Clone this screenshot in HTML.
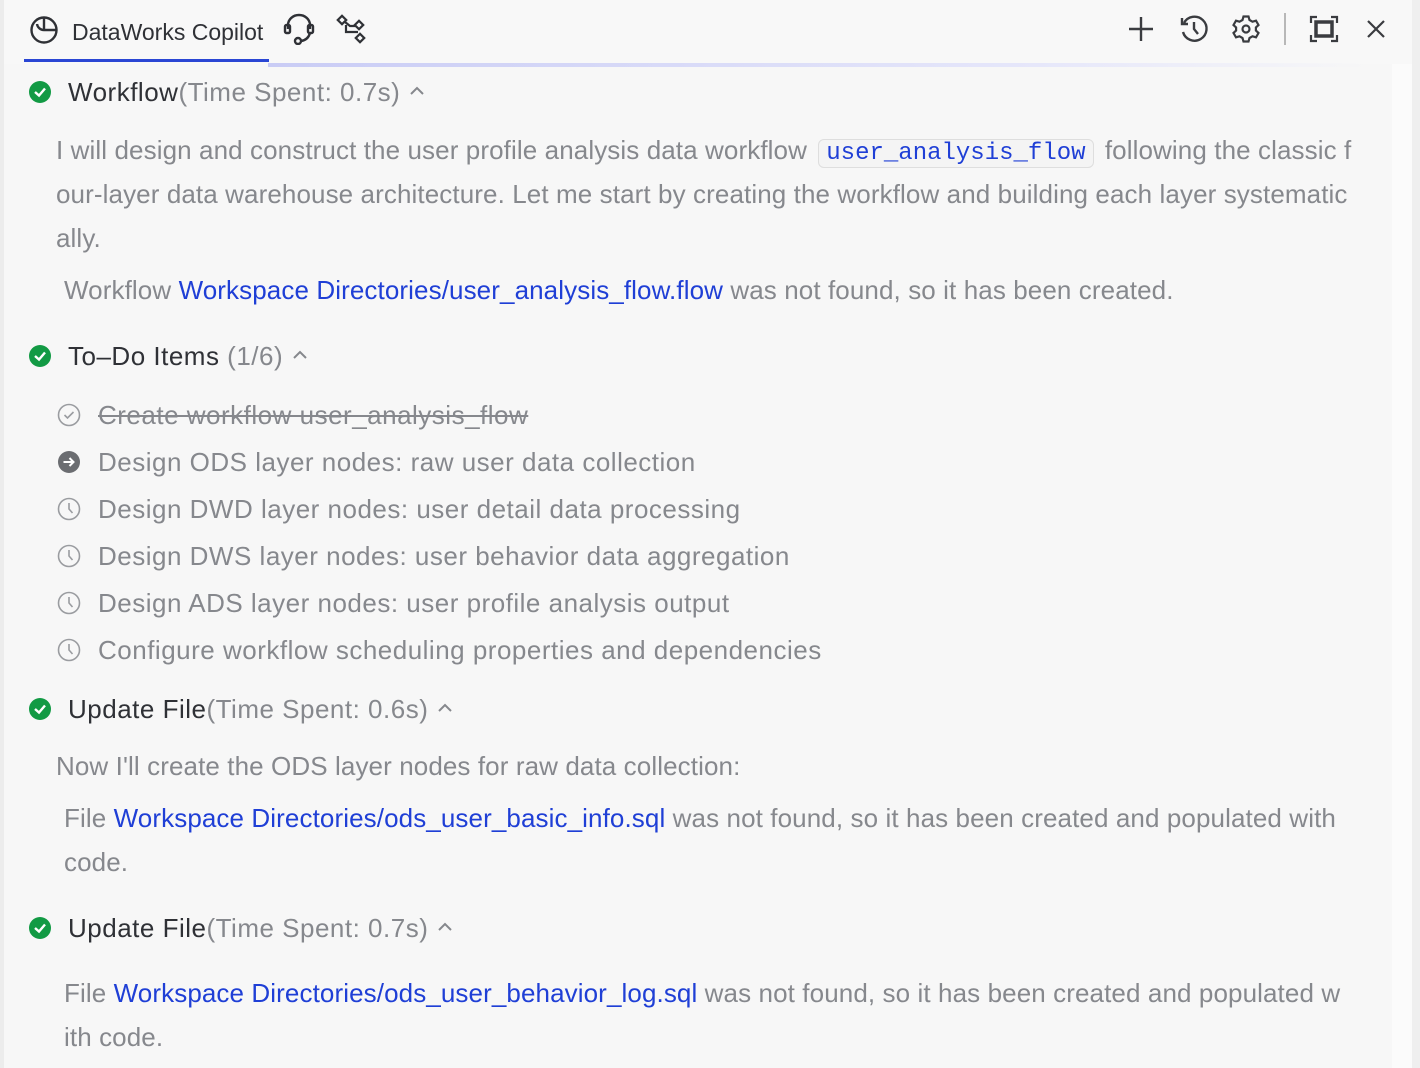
<!DOCTYPE html>
<html><head><meta charset="utf-8"><style>
*{margin:0;padding:0;box-sizing:border-box}
body{width:1420px;height:1068px;overflow:hidden;background:#fbfbfb;font-family:"Liberation Sans",Arial,sans-serif;position:relative}
.main{position:absolute;left:4px;top:64px;width:1388px;height:1004px;background:#f7f7f7}
.edge{position:absolute;left:0;top:0;width:4px;height:1068px;background:#ececec}
.redge{position:absolute;right:0;top:0;width:8px;height:1068px;background:#efefef}
.hdr{position:absolute;left:4px;top:0;width:1408px;height:64px;background:#f8f8f8}
.glow{position:absolute;left:268px;top:63px;width:1100px;height:4px;background:linear-gradient(90deg,#c9ccf5,#e6e7fa 70%,rgba(240,240,250,0))}
.tabline{position:absolute;left:24px;top:59px;width:245px;height:3px;background:#2a46d4}
.l{position:absolute;white-space:nowrap;font-size:26px;letter-spacing:0.5px;line-height:44px;color:#86888d}
.p{letter-spacing:0.1px}
.h{color:#2f3136}
.a{color:#1f3fd6}
.code{font-family:"Liberation Mono","DejaVu Sans Mono",monospace;color:#1f3fd6;border:1px solid #dedede;border-radius:6px;background:#f4f4f4;padding:0 7px;font-size:24px;letter-spacing:0;margin:0 4px}
.ok{position:absolute;width:22px;height:22px;border-radius:50%;background:#129a44}
.ok svg{position:absolute;left:4px;top:5px}
svg.i{position:absolute}
.chev{display:inline-block;vertical-align:middle;margin-left:6px;margin-top:-6px}
</style></head><body>
<div class="hdr"></div>
<div class="main"></div>
<div class="edge"></div>
<div class="redge"></div>
<div class="glow"></div>
<div class="tabline"></div>

<svg class="i" style="left:29px;top:15px" width="30" height="30" viewBox="0 0 30 30" fill="none" stroke="#2f3136" stroke-width="2.4"><circle cx="15" cy="15" r="12.5"/><path d="M15 2.5 V15 H27.5 M15 15 A7 7 0 0 1 8 9"/></svg>
<div class="l h" style="left:72px;top:10px;font-size:23px;letter-spacing:0;color:#2f3136">DataWorks Copilot</div>
<svg class="i" style="left:282px;top:13px" width="34" height="32" viewBox="0 0 34 32" fill="none" stroke="#2f3136" stroke-width="2.4"><path d="M6 16 V12 A11 10 0 0 1 28 12 V16"/><rect x="3" y="12" width="5" height="8" rx="1.5"/><rect x="26" y="12" width="5" height="8" rx="1.5"/><path d="M28 20 Q26 27 19 28"/><circle cx="16" cy="28" r="3"/></svg>
<svg class="i" style="left:336px;top:14px" width="30" height="30" viewBox="0 0 30 30" fill="none" stroke="#2f3136" stroke-width="2.2"><rect x="3" y="3" width="6" height="6" transform="rotate(45 6 6)"/><path d="M9 8 L14 12 H20 M10 11 V18 H22"/><rect x="21" y="21" width="6" height="6" transform="rotate(45 24 24)"/><rect x="20" y="8" width="6" height="6" transform="rotate(45 23 11)"/></svg>

<svg class="i" style="left:1127px;top:15px" width="28" height="28" viewBox="0 0 28 28" stroke="#3a3c40" stroke-width="2.4"><path d="M14 2 V26 M2 14 H26"/></svg>
<svg class="i" style="left:1179px;top:14px" width="30" height="30" viewBox="0 0 30 30" fill="none" stroke="#3a3c40" stroke-width="2.4"><path d="M5 9 A12 12 0 1 1 4 18"/><path d="M3 4 V10 H9"/><path d="M15 8 V15 L19 20"/></svg>
<svg class="i" style="left:1231px;top:14px" width="30" height="30" viewBox="0 0 30 30" fill="none" stroke="#3a3c40" stroke-width="2.2"><path d="M12.5 2.5 h5 l1 3.5 l3 1.7 l3.5-1 l2.5 4.3 l-2.6 2.5 v3 l2.6 2.5 l-2.5 4.3 l-3.5-1 l-3 1.7 l-1 3.5 h-5 l-1-3.5 l-3-1.7 l-3.5 1 l-2.5-4.3 l2.6-2.5 v-3 l-2.6-2.5 l2.5-4.3 l3.5 1 l3-1.7 z"/><circle cx="15" cy="15" r="3.5"/></svg>
<div style="position:absolute;left:1284px;top:13px;width:2px;height:32px;background:#b8b8b8"></div>
<svg class="i" style="left:1309px;top:15px" width="30" height="28" viewBox="0 0 30 28" fill="none" stroke="#3a3c40" stroke-width="2.2"><path d="M2 8 V2 H8 M22 2 H28 V8 M28 20 V26 H22 M8 26 H2 V20"/><rect x="7" y="7" width="16" height="14" stroke-width="3.5"/></svg>
<svg class="i" style="left:1365px;top:18px" width="22" height="22" viewBox="0 0 22 22" stroke="#3a3c40" stroke-width="2.2"><path d="M3 3 L19 19 M19 3 L3 19"/></svg>

<div class="ok" style="left:29px;top:81px"><svg width="14" height="12" viewBox="0 0 14 12" fill="none" stroke="#fff" stroke-width="2.4"><path d="M2 6 L6 9.5 L12 2.5"/></svg></div>
<div class="l" style="left:68px;top:70px"><span class="h">Workflow</span>(Time Spent: 0.7s)<svg class="chev" width="22" height="14" viewBox="0 0 22 14" fill="none" stroke="#86888d" stroke-width="2"><path d="M5 10 L11 4 L17 10"/></svg></div>

<div class="l p" style="left:56px;top:128px">I will design and construct the user profile analysis data workflow <span class="code">user_analysis_flow</span> following the classic f</div>
<div class="l p" style="left:56px;top:172px">our-layer data warehouse architecture. Let me start by creating the workflow and building each layer systematic</div>
<div class="l p" style="left:56px;top:216px">ally.</div>
<div class="l p" style="left:64px;top:268px">Workflow <span class="a">Workspace Directories/user_analysis_flow.flow</span> was not found, so it has been created.</div>

<div class="ok" style="left:29px;top:345px"><svg width="14" height="12" viewBox="0 0 14 12" fill="none" stroke="#fff" stroke-width="2.4"><path d="M2 6 L6 9.5 L12 2.5"/></svg></div>
<div class="l" style="left:68px;top:334px"><span class="h">To–Do Items</span> (1/6)<svg class="chev" width="22" height="14" viewBox="0 0 22 14" fill="none" stroke="#86888d" stroke-width="2"><path d="M5 10 L11 4 L17 10"/></svg></div>

<svg class="i" style="left:57px;top:403px" width="24" height="24" viewBox="0 0 24 24" fill="none" stroke="#9a9ca0" stroke-width="1.6"><circle cx="12" cy="12" r="10.5"/><path d="M7.5 12 L10.5 15 L16.5 9"/></svg>
<div class="l" style="left:98px;top:393px;text-decoration:line-through">Create workflow user_analysis_flow</div>
<svg class="i" style="left:57px;top:450px" width="24" height="24" viewBox="0 0 24 24"><circle cx="12" cy="12" r="11" fill="#6b6d71"/><path d="M6.5 12 H16.5 M12.5 8 L16.5 12 L12.5 16" fill="none" stroke="#fff" stroke-width="2"/></svg>
<div class="l" style="left:98px;top:440px">Design ODS layer nodes: raw user data collection</div>
<svg class="i" style="left:57px;top:497px" width="24" height="24" viewBox="0 0 24 24" fill="none" stroke="#9a9ca0" stroke-width="1.6"><circle cx="12" cy="12" r="10.5"/><path d="M12 6 V12 L15.5 16"/></svg>
<div class="l" style="left:98px;top:487px">Design DWD layer nodes: user detail data processing</div>
<svg class="i" style="left:57px;top:544px" width="24" height="24" viewBox="0 0 24 24" fill="none" stroke="#9a9ca0" stroke-width="1.6"><circle cx="12" cy="12" r="10.5"/><path d="M12 6 V12 L15.5 16"/></svg>
<div class="l" style="left:98px;top:534px">Design DWS layer nodes: user behavior data aggregation</div>
<svg class="i" style="left:57px;top:591px" width="24" height="24" viewBox="0 0 24 24" fill="none" stroke="#9a9ca0" stroke-width="1.6"><circle cx="12" cy="12" r="10.5"/><path d="M12 6 V12 L15.5 16"/></svg>
<div class="l" style="left:98px;top:581px">Design ADS layer nodes: user profile analysis output</div>
<svg class="i" style="left:57px;top:638px" width="24" height="24" viewBox="0 0 24 24" fill="none" stroke="#9a9ca0" stroke-width="1.6"><circle cx="12" cy="12" r="10.5"/><path d="M12 6 V12 L15.5 16"/></svg>
<div class="l" style="left:98px;top:628px">Configure workflow scheduling properties and dependencies</div>

<div class="ok" style="left:29px;top:698px"><svg width="14" height="12" viewBox="0 0 14 12" fill="none" stroke="#fff" stroke-width="2.4"><path d="M2 6 L6 9.5 L12 2.5"/></svg></div>
<div class="l" style="left:68px;top:687px"><span class="h">Update File</span>(Time Spent: 0.6s)<svg class="chev" width="22" height="14" viewBox="0 0 22 14" fill="none" stroke="#86888d" stroke-width="2"><path d="M5 10 L11 4 L17 10"/></svg></div>
<div class="l p" style="left:56px;top:744px">Now I'll create the ODS layer nodes for raw data collection:</div>
<div class="l p" style="left:64px;top:796px">File <span class="a">Workspace Directories/ods_user_basic_info.sql</span> was not found, so it has been created and populated with</div>
<div class="l p" style="left:64px;top:840px">code.</div>

<div class="ok" style="left:29px;top:917px"><svg width="14" height="12" viewBox="0 0 14 12" fill="none" stroke="#fff" stroke-width="2.4"><path d="M2 6 L6 9.5 L12 2.5"/></svg></div>
<div class="l" style="left:68px;top:906px"><span class="h">Update File</span>(Time Spent: 0.7s)<svg class="chev" width="22" height="14" viewBox="0 0 22 14" fill="none" stroke="#86888d" stroke-width="2"><path d="M5 10 L11 4 L17 10"/></svg></div>
<div class="l p" style="left:64px;top:971px">File <span class="a">Workspace Directories/ods_user_behavior_log.sql</span> was not found, so it has been created and populated w</div>
<div class="l p" style="left:64px;top:1015px">ith code.</div>
</body></html>
